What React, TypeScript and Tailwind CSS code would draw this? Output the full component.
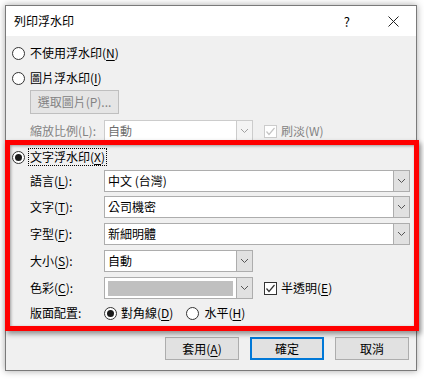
import React from "react";

function Mn({ children }: { children: React.ReactNode }) {
  return <span className="underline underline-offset-2">{children}</span>;
}

function Radio({ checked }: { checked?: boolean }) {
  return (
    <span className="flex h-[13px] w-[13px] shrink-0 items-center justify-center rounded-full border border-[#333] bg-white">
      {checked && <span className="h-[7px] w-[7px] rounded-full bg-[#1a1a1a]" />}
    </span>
  );
}

function Check({ checked, disabled }: { checked?: boolean; disabled?: boolean }) {
  const c = disabled ? "#c4c4c4" : "#333";
  return (
    <span
      className={`flex h-[13px] w-[13px] shrink-0 items-center justify-center border bg-white ${
        disabled ? "border-[#cccccc]" : "border-[#333]"
      }`}
    >
      {checked && (
        <svg width="11" height="11" viewBox="0 0 11 11">
          <path d="M1.5 5.5 L4 8.5 L9.5 2" fill="none" stroke={c} strokeWidth="1.2" />
        </svg>
      )}
    </span>
  );
}

function Combo({
  value,
  wide,
  disabled,
  swatch,
}: {
  value?: string;
  wide?: boolean;
  disabled?: boolean;
  swatch?: boolean;
}) {
  return (
    <div
      className={`flex h-[22px] shrink-0 border bg-white ${wide ? "w-[306px]" : "w-[149px]"} ${
        disabled ? "border-[#cccccc]" : "border-[#adadad]"
      }`}
    >
      <div className="flex flex-1 items-center px-[3px]">
        {swatch ? (
          <div className="h-[15px] w-full bg-[#c0c0c0]" />
        ) : (
          <span className={disabled ? "text-[#6d6d6d]" : "text-black"}>{value}</span>
        )}
      </div>
      <div
        className={`flex w-[16px] items-center justify-center border-l ${
          disabled ? "border-[#cccccc] bg-[#f4f4f4]" : "border-[#adadad] bg-[#e1e1e1]"
        }`}
      >
        <svg width="9" height="6" viewBox="0 0 9 6">
          <path d="M1 1 L4.5 4.5 L8 1" fill="none" stroke={disabled ? "#a0a0a0" : "#555"} strokeWidth="1" />
        </svg>
      </div>
    </div>
  );
}

function Row({ label, children }: { label: React.ReactNode; children: React.ReactNode }) {
  return (
    <div className="ml-[18px] flex h-[22px] items-center">
      <span className="w-[74px] shrink-0">{label}</span>
      {children}
    </div>
  );
}

function Button({ children, primary }: { children: React.ReactNode; primary?: boolean }) {
  return (
    <div
      className={`flex h-[23px] w-[74px] items-center justify-center bg-[#e1e1e1] ${
        primary ? "border-2 border-[#0078d7]" : "border border-[#adadad]"
      }`}
    >
      {children}
    </div>
  );
}

export default function App() {
  return (
    <div className="relative h-[379px] w-[424px] overflow-hidden bg-white font-['Noto_Sans_CJK_TC',sans-serif] text-[12px] leading-none text-black">
      {/* Dialog */}
      <div className="ml-[5px] mt-[5px] flex h-[366px] w-[412px] flex-col border border-[#7a7a7a] shadow-[0_0_7px_rgba(0,0,0,0.35)]">
        <div className="flex h-[30px] items-center bg-white pl-[8px]">
          <span className="flex-1">列印浮水印</span>
          <span className="mr-[38px] text-[13px]">?</span>
          <svg width="11" height="11" viewBox="0 0 11 11" className="mr-[17px]">
            <path d="M0.5 0.5 L10.5 10.5 M10.5 0.5 L0.5 10.5" stroke="#222" strokeWidth="1" />
          </svg>
        </div>

        <div className="flex flex-1 flex-col bg-[#f0f0f0] pl-[6px] pt-[7px]">
          <div className="flex h-[20px] items-center gap-[5px]">
            <Radio />
            <span>
              不使用浮水印(<Mn>N</Mn>)
            </span>
          </div>
          <div className="mt-[5px] flex h-[20px] items-center gap-[5px]">
            <Radio />
            <span>
              圖片浮水印(<Mn>I</Mn>)
            </span>
          </div>
          <div className="ml-[18px] mt-[2px] flex h-[24px] w-[89px] items-center justify-center border border-[#bfbfbf] bg-[#e5e5e5] text-[#838383]">
            選取圖片(P)...
          </div>
          <div className="mt-[6px] flex items-center">
            <div className="ml-[18px] flex h-[22px] items-center text-[#838383]">
              <span className="w-[74px] shrink-0">縮放比例(L):</span>
              <Combo value="自動" disabled />
            </div>
            <div className="ml-[11px] flex items-center gap-[4px] text-[#838383]">
              <Check checked disabled />
              <span>刷淡(W)</span>
            </div>
          </div>

          <div className="mt-[5px] flex h-[20px] items-center gap-[3px]">
            <Radio checked />
            <span className="flex h-[18px] items-center border border-dotted border-black px-[1px]">
              文字浮水印(<Mn>X</Mn>)
            </span>
          </div>
          <div className="mt-[3px]">
            <Row
              label={
                <>
                  語言(<Mn>L</Mn>):
                </>
              }
            >
              <Combo value="中文 (台灣)" wide />
            </Row>
          </div>
          <div className="mt-[4px]">
            <Row
              label={
                <>
                  文字(<Mn>T</Mn>):
                </>
              }
            >
              <Combo value="公司機密" wide />
            </Row>
          </div>
          <div className="mt-[5px]">
            <Row
              label={
                <>
                  字型(<Mn>F</Mn>):
                </>
              }
            >
              <Combo value="新細明體" wide />
            </Row>
          </div>
          <div className="mt-[5px]">
            <Row
              label={
                <>
                  大小(<Mn>S</Mn>):
                </>
              }
            >
              <Combo value="自動" />
            </Row>
          </div>
          <div className="mt-[5px]">
            <Row
              label={
                <>
                  色彩(<Mn>C</Mn>):
                </>
              }
            >
              <Combo swatch />
              <div className="ml-[11px] flex items-center gap-[4px]">
                <Check checked />
                <span>
                  半透明(<Mn>E</Mn>)
                </span>
              </div>
            </Row>
          </div>
          <div className="ml-[18px] mt-[4px] flex h-[20px] items-center">
            <span className="w-[74px] shrink-0">版面配置:</span>
            <div className="flex items-center gap-[4px]">
              <Radio checked />
              <span>
                對角線(<Mn>D</Mn>)
              </span>
            </div>
            <div className="ml-[13px] flex items-center gap-[5px]">
              <Radio />
              <span>
                水平(<Mn>H</Mn>)
              </span>
            </div>
          </div>

          <div className="mt-[14px] flex justify-end gap-[11px] pr-[7px]">
            <Button>
              套用(<Mn>A</Mn>)
            </Button>
            <Button primary>確定</Button>
            <Button>取消</Button>
          </div>
        </div>
      </div>

      {/* Red highlight annotation */}
      <div className="pointer-events-none absolute left-[5px] top-[140px] h-[191px] w-[414px] border-[5px] border-[#ff0000] shadow-[2px_3px_5px_rgba(0,0,0,0.4),inset_1px_1px_3px_rgba(0,0,0,0.35)]" />
    </div>
  );
}
